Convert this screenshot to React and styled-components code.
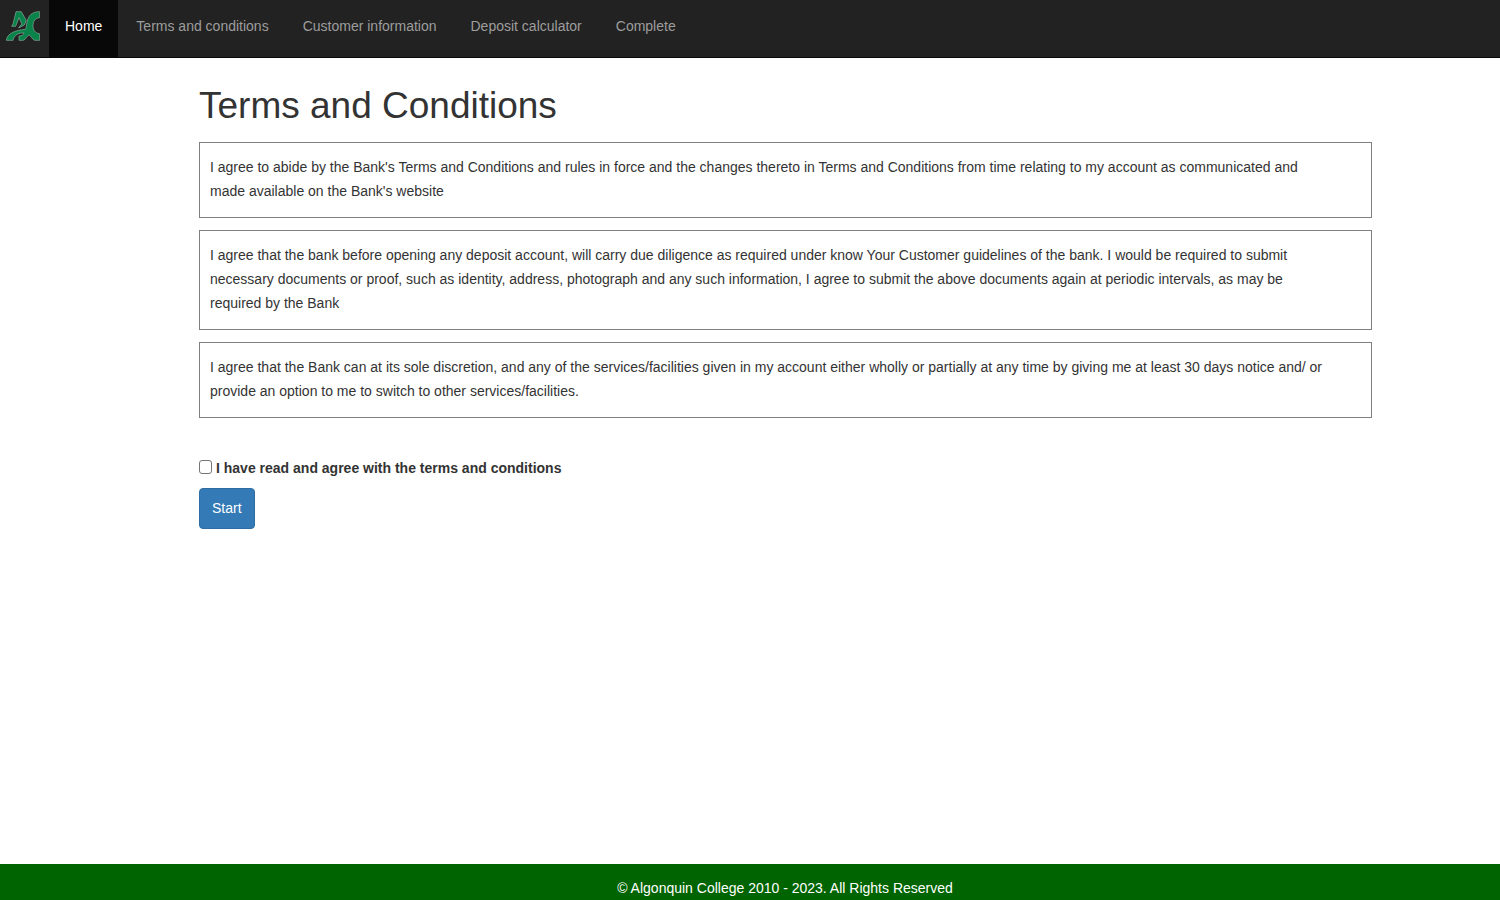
import React from "react";
import styled, { createGlobalStyle } from "styled-components";

const GlobalStyle = createGlobalStyle`
  *, *::before, *::after { box-sizing: border-box; }
  body {
    margin: 0;
    background: #fff;
    color: #333;
    font-family: "Liberation Sans", Arial, sans-serif;
    font-size: 14px;
    line-height: 24px;
  }
`;

const Page = styled.div`
  display: flex;
  flex-direction: column;
  min-height: 100vh;
`;

const Navbar = styled.nav`
  display: flex;
  background: #222;
  border-bottom: 1px solid #080808;
`;

const Brand = styled.a`
  padding: 11px 9px 0 6px;
  line-height: 0;
`;

const NavList = styled.ul`
  display: flex;
  flex-wrap: wrap;
  gap: 2px;
  margin: 0;
  padding: 0;
  list-style: none;
`;

const NavLink = styled.a`
  display: block;
  padding: 14px 16px 19px;
  color: ${({ $active }) => ($active ? "#fff" : "#9d9d9d")};
  background: ${({ $active }) => ($active ? "#080808" : "transparent")};
  text-decoration: none;
`;

const Main = styled.main`
  flex: 1;
  padding: 24px 128px 24px 199px;
`;

const Title = styled.h1`
  margin: 0 0 12px;
  font-size: 37px;
  font-weight: 400;
  line-height: 48px;
`;

const Terms = styled.div`
  display: flex;
  flex-direction: column;
  gap: 12px;
`;

const Term = styled.p`
  margin: 0;
  padding: 12px 40px 14px 10px;
  border: 1px solid #808080;
`;

const Form = styled.form`
  display: flex;
  flex-direction: column;
  align-items: flex-start;
  gap: 8px;
  margin-top: 38px;
`;

const Agreement = styled.label`
  display: flex;
  align-items: flex-start;
  gap: 4px;
  font-weight: 700;
`;

const Checkbox = styled.input`
  width: 13px;
  height: 14px;
  margin: 4px 0 0;
  appearance: none;
  background: #fff;
  border: 1px solid #767676;
  border-radius: 3px;

  &:checked {
    background: #337ab7;
  }
`;

const StartButton = styled.button`
  padding: 7px 12px 8px;
  border: 1px solid #2e6da4;
  border-radius: 4px;
  background: #337ab7;
  color: #fff;
  font: inherit;
  cursor: pointer;
`;

const Footer = styled.footer`
  padding: 12px 0 0 70px;
  background: #006400;
  color: #fff;
  text-align: center;
`;

const links = [
  "Home",
  "Terms and conditions",
  "Customer information",
  "Deposit calculator",
  "Complete",
];

const terms = [
  "I agree to abide by the Bank's Terms and Conditions and rules in force and the changes thereto in Terms and Conditions from time relating to my account as communicated and made available on the Bank's website",
  "I agree that the bank before opening any deposit account, will carry due diligence as required under know Your Customer guidelines of the bank. I would be required to submit necessary documents or proof, such as identity, address, photograph and any such information, I agree to submit the above documents again at periodic intervals, as may be required by the Bank",
  "I agree that the Bank can at its sole discretion, and any of the services/facilities given in my account either wholly or partially at any time by giving me at least 30 days notice and/ or provide an option to me to switch to other services/facilities.",
];

function Logo() {
  return (
    <svg width="34" height="30" viewBox="18 33 102 90" aria-hidden="true">
      <g fill="#08834a" stroke="#8fa99b" strokeWidth="2" strokeLinejoin="round">
        <path d="M48 35H64L79 62L73 75L56 84L60 77L66 73L57 53L47 79H35L39 72Z" />
        <path d="M119 35V53C106 54 99 64 99 77C99 90 106 100 119 101V121H104C96 119 95 108 87 105C79 108 78 119 70 121H57V108C66 108 70 105 72 99C56 98 43 104 39 121H19C22 99 46 91 77 88C81 76 79 62 87 50C94 39 105 35 119 35Z" />
      </g>
    </svg>
  );
}

export default function App() {
  return (
    <Page>
      <GlobalStyle />
      <Navbar>
        <Brand href="#" aria-label="Algonquin College">
          <Logo />
        </Brand>
        <NavList>
          {links.map((label, i) => (
            <li key={label}>
              <NavLink href="#" $active={i === 0}>
                {label}
              </NavLink>
            </li>
          ))}
        </NavList>
      </Navbar>
      <Main>
        <Title>Terms and Conditions</Title>
        <Terms>
          {terms.map((text) => (
            <Term key={text}>{text}</Term>
          ))}
        </Terms>
        <Form onSubmit={(event) => event.preventDefault()}>
          <Agreement htmlFor="agree">
            <Checkbox type="checkbox" id="agree" />
            I have read and agree with the terms and conditions
          </Agreement>
          <StartButton type="submit">Start</StartButton>
        </Form>
      </Main>
      <Footer>© Algonquin College 2010 - 2023. All Rights Reserved</Footer>
    </Page>
  );
}
